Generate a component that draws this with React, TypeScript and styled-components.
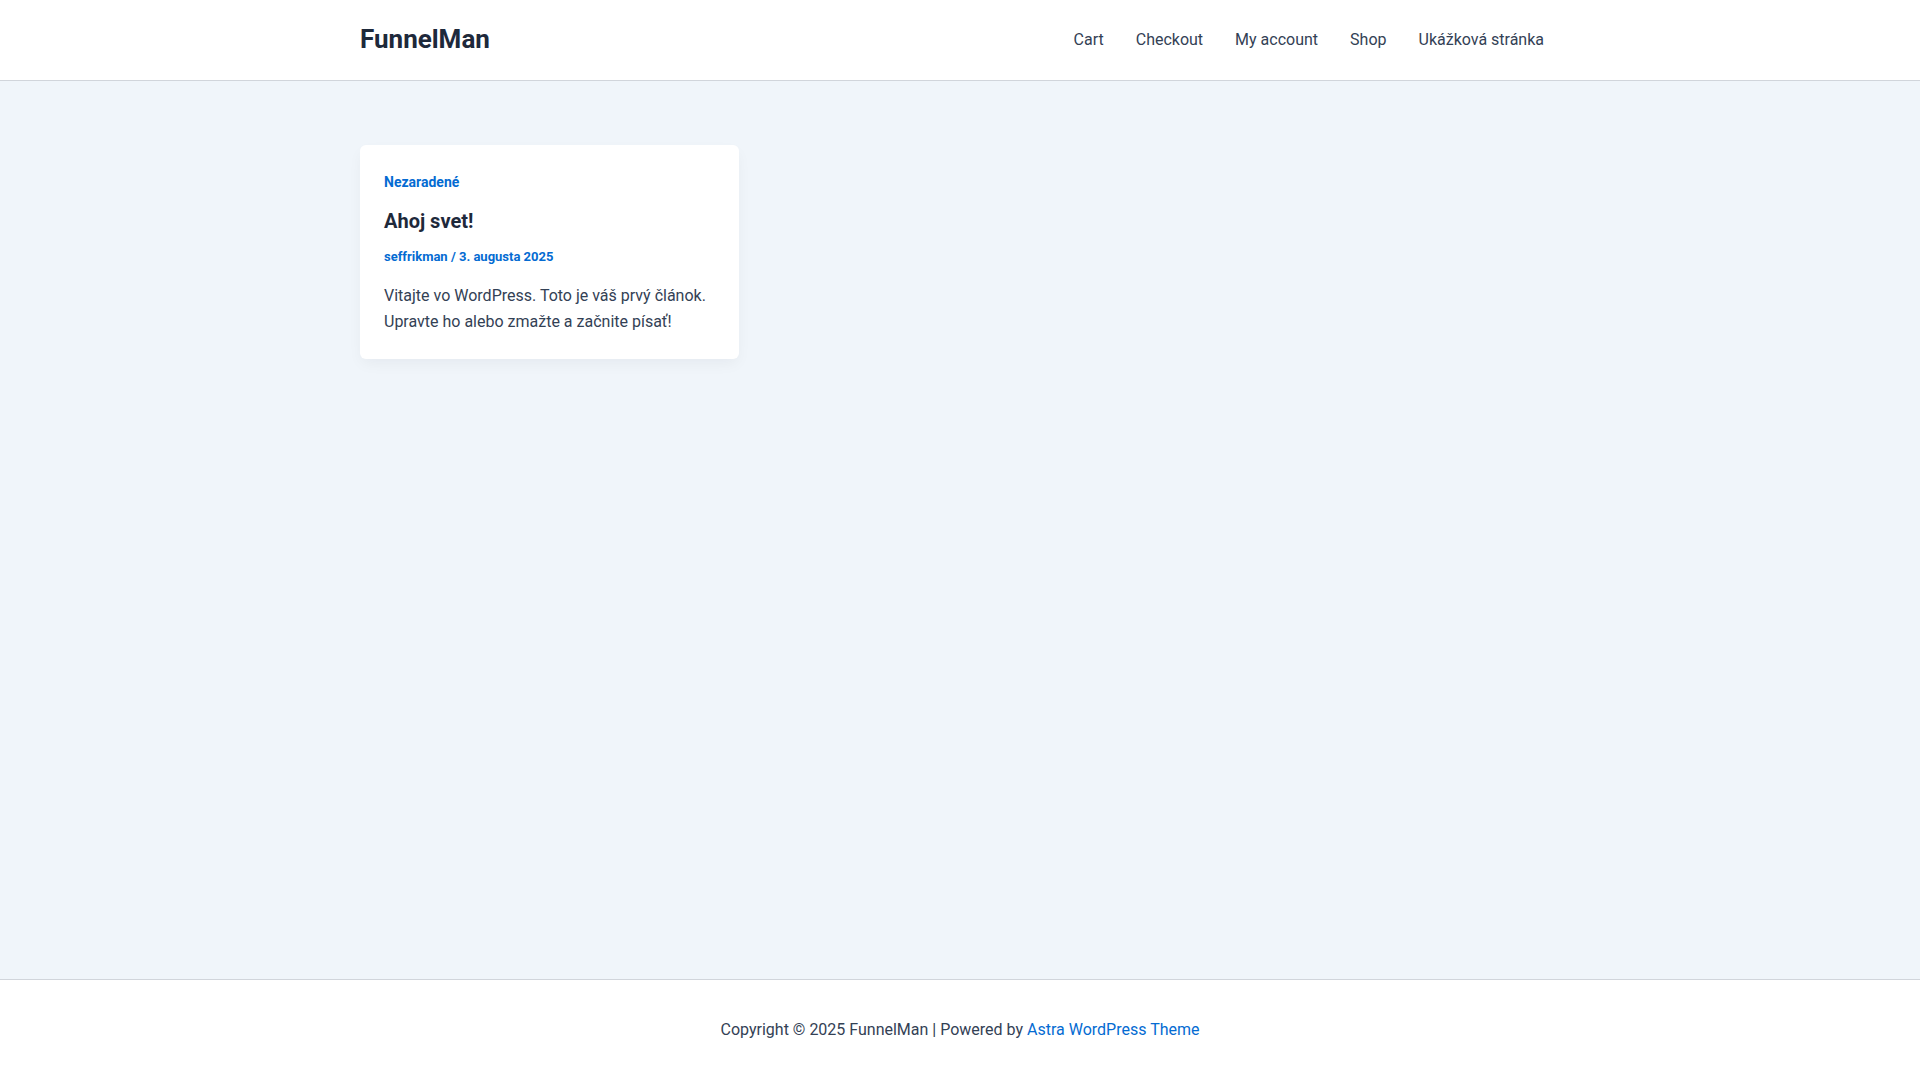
import React from 'react';
import styled, { createGlobalStyle } from 'styled-components';

const GlobalStyle = createGlobalStyle`
  html, body {
    margin: 0;
    padding: 0;
  }
  body {
    font-family: Roboto, "Liberation Sans", sans-serif;
    background-color: #f0f5fa;
    color: #334155;
  }
  * {
    box-sizing: border-box;
  }
`;

const Page = styled.div`
  display: flex;
  flex-direction: column;
  min-height: 100vh;
`;

const Header = styled.header`
  background-color: #ffffff;
  border-bottom: 1px solid #d1d5db;
`;

const HeaderInner = styled.div`
  max-width: 1200px;
  height: 80px;
  margin: 0 auto;
  display: flex;
  align-items: center;
  justify-content: space-between;
`;

const SiteTitle = styled.a`
  font-size: 26px;
  font-weight: 700;
  color: #1e293b;
  text-decoration: none;
  line-height: 1;
  padding-bottom: 2px;
`;

const Nav = styled.nav`
  display: flex;
  align-items: center;
`;

const NavLink = styled.a`
  font-size: 16px;
  color: #334155;
  text-decoration: none;
  padding: 0 16px;
  line-height: 80px;
`;

const Main = styled.main`
  flex: 1;
  padding-top: 64px;
`;

const Grid = styled.div`
  max-width: 1200px;
  margin: 0 auto;
  display: grid;
  grid-template-columns: repeat(3, 379px);
  gap: 31px;
`;

const Card = styled.article`
  background-color: #ffffff;
  border-radius: 6px;
  box-shadow: 0px 6px 15px -2px rgba(16, 24, 40, 0.05);
  padding: 27px 24px 24px;
`;

const Category = styled.a`
  display: block;
  font-size: 14px;
  font-weight: 700;
  color: #046bd2;
  text-decoration: none;
  line-height: 20px;
`;

const Title = styled.h2`
  margin: 15px 0 0;
  font-size: 20px;
  font-weight: 700;
  color: #1e293b;
  line-height: 28px;
`;

const Meta = styled.div`
  margin-top: 12px;
  font-size: 13px;
  font-weight: 700;
  color: #046bd2;
  line-height: 20px;
`;

const Excerpt = styled.p`
  margin: 16px 0 0;
  font-size: 16px;
  line-height: 26px;
  color: #334155;
`;

const Footer = styled.footer`
  background-color: #ffffff;
  border-top: 1px solid #d1d5db;
  height: 101px;
  display: flex;
  align-items: center;
  justify-content: center;
`;

const FooterText = styled.div`
  font-size: 16px;
  color: #334155;
  line-height: 24px;
`;

const FooterLink = styled.a`
  color: #046bd2;
  text-decoration: none;
`;

const menu = ['Cart', 'Checkout', 'My account', 'Shop', 'Ukážková stránka'];

export default function App() {
  return (
    <Page>
      <GlobalStyle />
      <Header>
        <HeaderInner>
          <SiteTitle href="#">FunnelMan</SiteTitle>
          <Nav>
            {menu.map((item) => (
              <NavLink key={item} href="#">
                {item}
              </NavLink>
            ))}
          </Nav>
        </HeaderInner>
      </Header>
      <Main>
        <Grid>
          <Card>
            <Category href="#">Nezaradené</Category>
            <Title>Ahoj svet!</Title>
            <Meta>seffrikman / 3. augusta 2025</Meta>
            <Excerpt>
              Vitajte vo WordPress. Toto je váš prvý článok. Upravte ho alebo zmažte a začnite písať!
            </Excerpt>
          </Card>
        </Grid>
      </Main>
      <Footer>
        <FooterText>
          Copyright © 2025 FunnelMan | Powered by <FooterLink href="#">Astra WordPress Theme</FooterLink>
        </FooterText>
      </Footer>
    </Page>
  );
}
